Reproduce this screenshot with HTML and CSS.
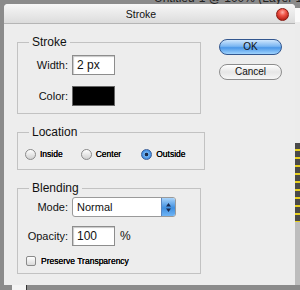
FILE: index.html
```html
<!DOCTYPE html>
<html lang="en">
    <head>
        <meta charset="UTF-8">
        <title>Stroke</title>
        <link rel="stylesheet" href="styles.css">
    </head>
    <body>
        <div class="topstrip">
            <span class="docicon"></span>
            <span class="doctitle">Untitled-1 @ 100% (Layer 1, RGB)</span>
        </div>
        <div class="stage">
            <div class="dialog">
                <div class="titlebar">
                    <span class="title">Stroke</span>
                    <span class="close"></span>
                </div>
                <div class="content">
                    <div class="groups">
                        <fieldset class="group stroke">
                            <legend>Stroke</legend>
                            <div class="row">
                                <label class="lbl">Width:</label>
                                <div class="field small">2 px</div>
                            </div>
                            <div class="row">
                                <label class="lbl">Color:</label>
                                <div class="swatch"></div>
                            </div>
                        </fieldset>
                        <fieldset class="group location">
                            <legend>Location</legend>
                            <div class="radios">
                                <span class="radio"><i></i>Inside</span>
                                <span class="radio"><i></i>Center</span>
                                <span class="radio on"><i></i>Outside</span>
                            </div>
                        </fieldset>
                        <fieldset class="group blending">
                            <legend>Blending</legend>
                            <div class="row">
                                <label class="lbl">Mode:</label>
                                <div class="select">
                                    <span>Normal</span>
                                    <span class="stepper">
                                        <svg width="7" height="11" viewBox="0 0 7 11"><path d="M3.5 1 L6 4.5 L1 4.5 Z M3.5 10 L6 6.5 L1 6.5 Z" fill="#1a2a50"/></svg>
                                    </span>
                                </div>
                            </div>
                            <div class="row">
                                <label class="lbl">Opacity:</label>
                                <div class="field small">100</div>
                                <span class="unit">%</span>
                            </div>
                            <div class="check"><i></i>Preserve Transparency</div>
                        </fieldset>
                    </div>
                    <div class="buttons">
                        <div class="btn ok">OK</div>
                        <div class="btn">Cancel</div>
                    </div>
                </div>
            </div>
            <div class="edge">
                <div class="edge-light"></div>
                <div class="edge-dark"></div>
                <div class="edge-grey"></div>
            </div>
        </div>
        <div class="bottomstrip">
            <span class="whitebox"></span>
        </div>
    </body>
</html>
```

FILE: styles.css
```css
*{
    padding: 0px;
    margin: 0px;
    box-sizing: border-box;
}
body{
    background: #8b8b8b;
    font-family: "Liberation Sans", Arial, sans-serif;
    color: #111;
    width: 300px;
    height: 290px;
    overflow: hidden;
}
.topstrip{
    height: 4px;
    overflow: hidden;
    display: flex;
}
.docicon{
    width: 7px;
    height: 3px;
    margin-left: 22px;
    background: #7a8a3a;
}
.doctitle{
    margin-left: 132px;
    margin-top: -8px;
    font-size: 12px;
    line-height: 12px;
    white-space: nowrap;
    color: #222;
}
.stage{
    display: flex;
    height: 281px;
}
.dialog{
    margin-left: 4px;
    width: 291px;
    height: 281px;
    background: #ededed;
    border-radius: 4px 4px 0 0;
}
.titlebar{
    height: 20px;
    background: linear-gradient(#f7f7f7, #dcdcdc);
    border-bottom: 1px solid #b5b5b5;
    border-radius: 4px 4px 0 0;
    display: flex;
    align-items: center;
    justify-content: center;
    position: relative;
    padding-right: 17px;
}
.title{
    font-size: 10.5px;
    color: #111;
}
.close{
    position: absolute;
    right: 6px;
    top: 4px;
    width: 13px;
    height: 13px;
    border-radius: 50%;
    background: radial-gradient(circle at 50% 30%, #ffb0a8 0, #f05548 35%, #b81e14 80%);
    border: 1px solid #8a1a12;
}
.content{
    display: flex;
    padding: 11px 0 0 13px;
}
.groups{
    width: 184px;
    display: flex;
    flex-direction: column;
    gap: 11px;
}
.group{
    border: 1px solid #c2c2c2;
    padding: 6px 0 7px 0;
}
.group legend{
    font-size: 12px;
    line-height: 14px;
    margin-left: 11px;
    padding: 0 3px;
}
.row{
    display: flex;
    align-items: center;
    height: 20px;
    margin-bottom: 11px;
}
.row:last-child{
    margin-bottom: 0;
}
.lbl{
    width: 54px;
    text-align: right;
    font-size: 11px;
    padding-right: 4px;
}
.field{
    height: 20px;
    background: #fff;
    border: 1px solid #8d8d8d;
    box-shadow: inset 1px 1px 1px #c8c8c8;
    font-size: 12px;
    line-height: 18px;
    padding-left: 4px;
}
.small{
    width: 43px;
}
.swatch{
    width: 43px;
    height: 20px;
    background: #000;
    border: 1px solid #666;
}
.location{
    padding: 9px 0 9px 0;
}
.radios{
    display: flex;
    height: 12px;
    align-items: center;
    padding-left: 7px;
}
.radio{
    display: flex;
    align-items: center;
    font-size: 8.5px;
    color: #000;
    text-shadow: 0 0 0.4px #000;
    margin-right: 18px;
}
.radio:nth-child(2){
    margin-right: 20px;
}
.radio i{
    width: 11px;
    height: 11px;
    border-radius: 50%;
    border: 1px solid #8a8a8a;
    background: linear-gradient(#ffffff, #d0d0d0);
    margin-right: 4px;
}
.radio.on i{
    background: radial-gradient(circle, #1b2b4a 0, #1b2b4a 22%, #6fb2f2 34%, #3b86dc 75%);
    border-color: #3a5f9a;
}
.blending{
    padding: 2px 0 7px 0;
}
.blending .row{
    margin-bottom: 9px;
}
.select{
    width: 104px;
    height: 20px;
    background: #fff;
    border: 1px solid #9a9a9a;
    border-radius: 3px;
    display: flex;
    align-items: center;
    justify-content: space-between;
    font-size: 11px;
    padding-left: 4px;
    overflow: hidden;
}
.stepper{
    width: 14px;
    height: 100%;
    background: linear-gradient(#a9d4fb, #3f8fe0 55%, #6fb4f5);
    display: flex;
    align-items: center;
    justify-content: center;
    border-left: 1px solid #5b86c0;
}
.unit{
    font-size: 12px;
    margin-left: 5px;
}
.check{
    display: flex;
    align-items: center;
    height: 10px;
    margin-top: 10px;
    padding-left: 8px;
    font-size: 8.5px;
    color: #000;
    text-shadow: 0 0 0.4px #000;
}
.check i{
    width: 10px;
    height: 10px;
    border: 1px solid #8a8a8a;
    border-radius: 2px;
    background: linear-gradient(#ffffff, #dadada);
    margin-right: 5px;
}
.buttons{
    margin-left: 18px;
    padding-top: 4px;
    display: flex;
    flex-direction: column;
    gap: 9px;
}
.btn{
    width: 63px;
    height: 16px;
    border-radius: 8px;
    border: 1px solid #8d8d8d;
    background: linear-gradient(#ffffff, #e6e6e6 50%, #f6f6f6);
    font-size: 10px;
    line-height: 14px;
    text-align: center;
}
.btn.ok{
    border-color: #33578f;
    background: linear-gradient(#cfe6fd, #7ab6f2 45%, #4b97e8 55%, #9fd3fd);
}
.edge{
    width: 5px;
    display: flex;
    flex-direction: column;
}
.edge-light{
    height: 139px;
    background: linear-gradient(#8b8b8b 0, #8b8b8b 4px, #fafafa 4px, #fafafa 18px, #ececec 18px);
}
.edge-dark{
    height: 79px;
    background: repeating-linear-gradient(#4a4a4a 0, #4a4a4a 6px, #e8d020 6px, #e8d020 8px);
}
.edge-grey{
    flex: 1;
    background: #bdbdbd;
}
.bottomstrip{
    height: 5px;
    display: flex;
}
.whitebox{
    width: 15px;
    height: 5px;
    margin-left: 12px;
    background: #f4f4f4;
    border-right: 1px solid #333;
}
```
